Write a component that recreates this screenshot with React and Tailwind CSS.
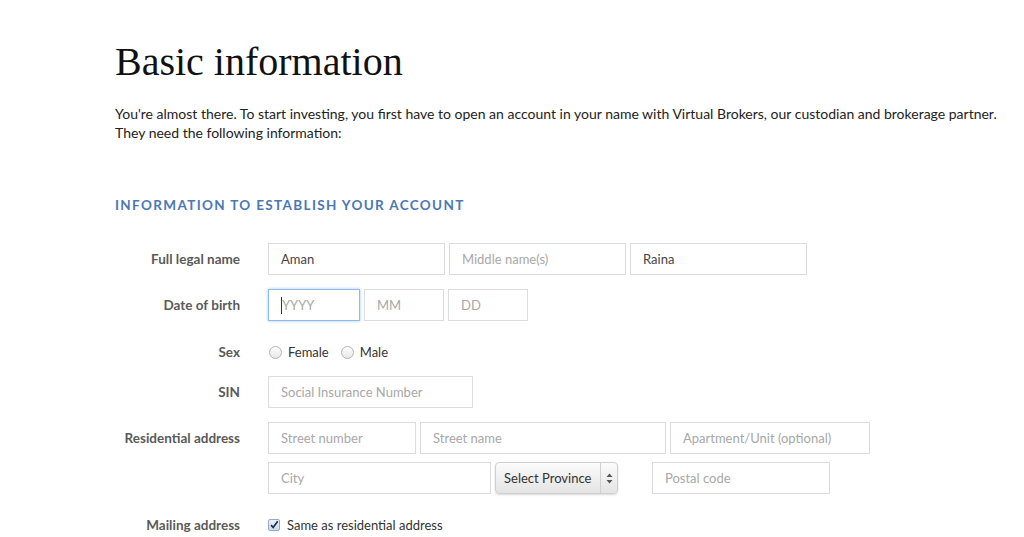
import React from 'react';

const Field = ({ w, value, placeholder, focused, className = '' }) => (
    <div
        className={`h-[32px] ${w} flex items-center px-3 bg-white border ${focused ? 'border-[#8fbbe8] shadow-[0_0_3px_rgba(100,160,230,0.6)]' : 'border-[#dcdcdc]'} text-[13px] ${className}`}
    >
        {focused && <span className="w-px h-[17px] bg-[#333]" />}
        {value ? <span className="text-[#444]">{value}</span> : <span className="text-[#a8a8a8]">{placeholder}</span>}
    </div>
);

const Label = ({ children }) => (
    <div className="w-[125px] shrink-0 text-right text-[13.5px] font-bold text-[#5a5a5a]">{children}</div>
);

const Radio = ({ label }) => (
    <label className="flex items-center gap-[6px]">
        <span className="w-[13px] h-[13px] rounded-full border border-[#b5b5b5] bg-gradient-to-b from-white to-[#e6e6e6]" />
        <span className="text-[13px] text-[#333]">{label}</span>
    </label>
);

export default function App() {
    return (
        <div className="min-h-screen bg-white pl-[115px] pt-[38px] font-['Lato',sans-serif]">
            <h1 className="font-['Liberation_Serif',serif] text-[40px] leading-[48px] text-[#111]">Basic information</h1>

            <p className="mt-[18px] text-[14px] leading-[19px] text-[#222] w-[890px]">
                You're almost there. To start investing, you first have to open an account in your name with Virtual Brokers, our custodian and brokerage partner. They need the following information:
            </p>

            <h2 className="mt-[53px] text-[13.5px] font-bold tracking-[1.35px] text-[#4a78b5]">INFORMATION TO ESTABLISH YOUR ACCOUNT</h2>

            <div className="mt-[28px] flex flex-col">
                <div className="flex items-center gap-[28px]">
                    <Label>Full legal name</Label>
                    <div className="flex gap-[4px]">
                        <Field w="w-[177px]" value="Aman" />
                        <Field w="w-[177px]" placeholder="Middle name(s)" />
                        <Field w="w-[177px]" value="Raina" />
                    </div>
                </div>

                <div className="mt-[14px] flex items-center gap-[28px]">
                    <Label>Date of birth</Label>
                    <div className="flex gap-[4px]">
                        <Field w="w-[92px]" placeholder="YYYY" focused />
                        <Field w="w-[80px]" placeholder="MM" />
                        <Field w="w-[80px]" placeholder="DD" />
                    </div>
                </div>

                <div className="mt-[19px] flex items-center gap-[28px] h-[24px]">
                    <Label>Sex</Label>
                    <div className="flex items-center gap-[12px] pl-[1px]">
                        <Radio label="Female" />
                        <Radio label="Male" />
                    </div>
                </div>

                <div className="mt-[12px] flex items-center gap-[28px]">
                    <Label>SIN</Label>
                    <Field w="w-[205px]" placeholder="Social Insurance Number" />
                </div>

                <div className="mt-[14px] flex items-start gap-[28px]">
                    <div className="h-[32px] flex items-center"><Label>Residential address</Label></div>
                    <div className="flex flex-col gap-[8px]">
                        <div className="flex gap-[4px]">
                            <Field w="w-[148px]" placeholder="Street number" />
                            <Field w="w-[246px]" placeholder="Street name" />
                            <Field w="w-[200px]" placeholder="Apartment/Unit (optional)" />
                        </div>
                        <div className="flex items-center">
                            <Field w="w-[223px]" placeholder="City" />
                            <div className="ml-[4px] h-[32px] w-[123px] flex items-center rounded-[4px] border border-[#d0d0d0] bg-gradient-to-b from-[#fbfbfb] to-[#e4e4e4] shadow-[0_1px_2px_rgba(0,0,0,0.15)] text-[13px] text-[#333]">
                                <span className="flex-1 pl-[8px]">Select Province</span>
                                <span className="h-full w-[17px] border-l border-[#d0d0d0] flex items-center justify-center">
                                    <svg width="7" height="11" viewBox="0 0 7 11">
                                        <path d="M3.5 0.5 L6.5 4 H0.5 Z" fill="#555" />
                                        <path d="M3.5 10.5 L6.5 7 H0.5 Z" fill="#555" />
                                    </svg>
                                </span>
                            </div>
                            <Field w="w-[178px]" placeholder="Postal code" className="ml-[34px]" />
                        </div>
                    </div>
                </div>

                <div className="mt-[21px] flex items-center gap-[28px]">
                    <Label>Mailing address</Label>
                    <label className="flex items-center gap-[7px]">
                        <span className="w-[12px] h-[12px] rounded-[2px] border border-[#9aa9bd] bg-gradient-to-b from-[#e9f1fb] to-[#c9dbef] flex items-center justify-center">
                            <svg width="12" height="12" viewBox="0 0 12 12">
                                <path d="M2.5 6.2 L5 9 L10.5 1.5" stroke="#1c2b4a" strokeWidth="2" fill="none" />
                            </svg>
                        </span>
                        <span className="text-[13px] text-[#333]">Same as residential address</span>
                    </label>
                </div>
            </div>
        </div>
    );
}
